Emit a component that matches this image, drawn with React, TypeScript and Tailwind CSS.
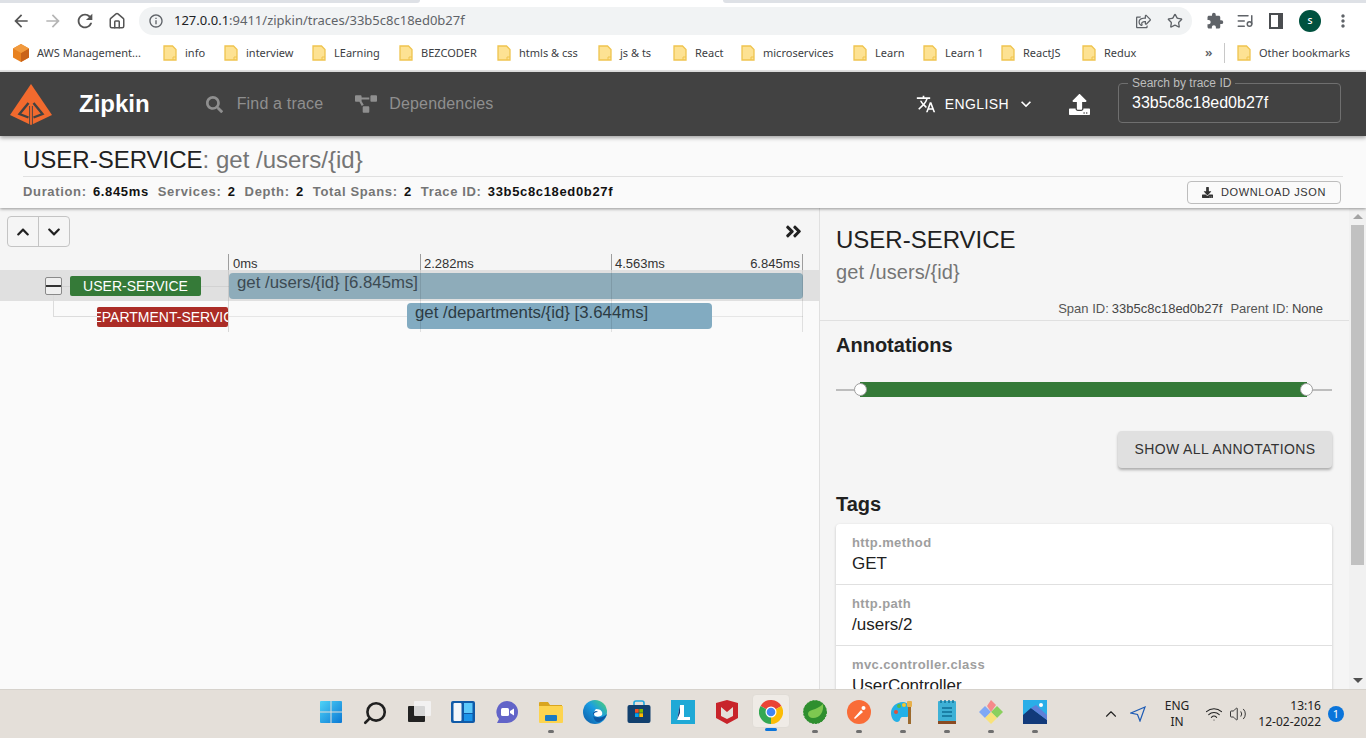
import React from 'react';
import { ChevronUp, Home, ListMusic, Search, Star, Volume2, Wifi } from 'lucide-react';
import {
  FaAngleDoubleRight,
  FaChevronDown,
  FaChevronUp,
  FaDownload,
  FaProjectDiagram,
  FaRegShareSquare,
  FaSearch,
  FaUpload,
} from 'react-icons/fa';
import {
  MdArrowBack,
  MdArrowForward,
  MdExtension,
  MdInfoOutline,
  MdKeyboardArrowDown,
  MdMoreVert,
  MdRefresh,
  MdTranslate,
} from 'react-icons/md';

/* ---------------- Bookmarks ---------------- */
const bookmarks = [
  { label: 'info', width: 'w-[21px]' },
  { label: 'interview', width: 'w-[48px]' },
  { label: 'LEarning', width: 'w-[47px]' },
  { label: 'BEZCODER', width: 'w-[58px]' },
  { label: 'htmls & css', width: 'w-[61px]' },
  { label: 'js & ts', width: 'w-[35px]' },
  { label: 'React', width: 'w-[28px]' },
  { label: 'microservices', width: 'w-[72px]' },
  { label: 'Learn', width: 'w-[30px]' },
  { label: 'Learn 1', width: 'w-[38px]' },
  { label: 'ReactJS', width: 'w-[41px]' },
  { label: 'Redux', width: 'w-[33px]' },
];

const Folder = () => (
  <svg width="14" height="16" viewBox="0 0 14 16" className="shrink-0">
    <path d="M1 1h8.5L13 4.5V15H1z" fill="#fde293" stroke="#efc44f" strokeWidth="1.3" />
    <path d="M10 15v-3h3" fill="none" stroke="#efc44f" strokeWidth="1" />
  </svg>
);

const BrowserChrome = () => (
  <div className="h-[72px] shrink-0 bg-white border-b-2 border-[#e3e3e3] font-['Noto_Sans',sans-serif]">
    <div className="flex h-[3px]">
      <div className="w-[420px] bg-[#dee1e6] rounded-br" />
      <div className="w-[303px]" />
      <div className="flex-1 bg-[#dee1e6] rounded-bl" />
    </div>

    {/* Toolbar */}
    <div className="flex items-center h-[32px] mt-[2px] mb-[1px] pl-[11px] text-[#5f6368]">
      <MdArrowBack size={20} className="text-[#555]" />
      <MdArrowForward size={20} className="ml-[12px] text-[#b5b5b5]" />
      <MdRefresh size={22} className="ml-[11px] text-[#555]" />
      <Home size={18} className="ml-[12px] text-[#555]" />
      <div className="flex items-center ml-[13px] w-[1053px] h-[28px] rounded-full bg-[#f1f3f4] pl-[9px]">
        <MdInfoOutline size={16} />
        <span className="ml-[10px] text-[13px] text-[#202124] whitespace-nowrap">
          127.0.0.1<span className="text-[#5f6368]">:9411/zipkin/traces/33b5c8c18ed0b27f</span>
        </span>
        <div className="ml-auto flex items-center">
          <FaRegShareSquare size={15} />
          <Star size={16} className="ml-[16px] mr-[9px]" />
        </div>
      </div>
      <MdExtension size={18} className="ml-[14px]" />
      <ListMusic size={18} className="ml-[12px]" />
      <svg width="14" height="16" viewBox="0 0 14 16" className="ml-[15px]">
        <rect x="1" y="1" width="12" height="14" fill="none" stroke="#4a4d50" strokeWidth="2" />
        <rect x="9" y="1" width="4" height="14" fill="#4a4d50" />
      </svg>
      <div className="ml-[16px] w-[22px] h-[22px] rounded-full bg-[#00523f] text-white text-[9px] font-semibold flex items-center justify-center">
        S
      </div>
      <MdMoreVert size={20} className="ml-[12px]" />
    </div>

    {/* Bookmarks bar */}
    <div className="flex items-center h-[30px] pl-[13px] text-[11px] text-[#3c4043] whitespace-nowrap">
      <svg width="16" height="18" viewBox="0 0 16 18" className="shrink-0">
        <path d="M8 0l8 4.5v9L8 18l-8-4.5v-9z" fill="#e8811f" />
        <path d="M8 9l8-4.5v9L8 18z" fill="#c9631a" />
        <path d="M8 0l8 4.5L8 9 0 4.5z" fill="#f19a3e" />
      </svg>
      <span className="ml-[8px] w-[108px]">AWS Management...</span>
      {bookmarks.map((b) => (
        <div key={b.label} className="flex items-center gap-[8px] shrink-0 ml-[18px]">
          <Folder />
          <span className={b.width}>{b.label}</span>
        </div>
      ))}
      <span className="ml-[68px] w-[7px] text-[13px] font-semibold text-[#5f6368]">»</span>
      <div className="ml-[12px] w-px h-[20px] bg-[#c8c8c8]" />
      <div className="ml-[12px] flex items-center gap-[8px]">
        <Folder />
        <span>Other bookmarks</span>
      </div>
    </div>
  </div>
);

/* ---------------- Zipkin header ---------------- */
const ZipkinLogo = () => (
  <svg width="42" height="41" viewBox="0 0 42 41" className="shrink-0">
    <path d="M21 0l21 31-21 10L0 31z" fill="#f26a2e" />
    <path d="M18.5 19L9.5 30l9 3.5M23.5 19l9 11-9 3.5" fill="none" stroke="#424242" strokeWidth="2.4" />
    <path d="M19.6 41V22M22.4 41V22" stroke="#424242" strokeWidth="0.9" />
  </svg>
);

const ZipkinHeader = () => (
  <header className="relative z-20 flex items-center h-[64px] shrink-0 bg-[#424242] shadow-[0_2px_4px_rgba(0,0,0,0.35)] pl-[10px] pr-[25px]">
    <ZipkinLogo />
    <span className="ml-[27px] text-[24px] font-bold text-white">Zipkin</span>
    <FaSearch size={17} className="ml-[56px] text-[#8f8f8f]" />
    <span className="ml-[14px] text-[16px] tracking-[0.17px] text-[#8f8f8f]">Find a trace</span>
    <FaProjectDiagram size={22} className="ml-[32px] text-[#8f8f8f]" />
    <span className="ml-[12px] text-[16px] tracking-[0.17px] text-[#8f8f8f]">Dependencies</span>

    <div className="ml-auto flex items-center text-white">
      <MdTranslate size={20} />
      <span className="ml-[9px] text-[14px] font-medium tracking-[0.4px]">ENGLISH</span>
      <MdKeyboardArrowDown size={20} className="ml-[7px]" />
      <FaUpload size={21} className="ml-[33px]" />
      <div className="relative ml-[28px] w-[223px] h-[40px] mb-[3px] border border-[#6f6f6f] rounded flex items-center pl-[13px] text-[16px]">
        <span className="absolute -top-[7px] left-[9px] bg-[#424242] px-[4px] text-[12px] leading-[12px] text-[#bdbdbd]">
          Search by trace ID
        </span>
        33b5c8c18ed0b27f
      </div>
    </div>
  </header>
);

const SubHeader = () => (
  <div className="relative z-10 h-[72px] shrink-0 bg-[#fafafa] shadow-[0_1px_3px_rgba(0,0,0,0.4)] px-[23px] pt-[8px]">
    <div className="h-[32px] text-[24px] leading-[32px] text-[#212121] border-b border-[#e0e0e0] box-content">
      USER-SERVICE<span className="text-[#757575]">: get /users/{'{id}'}</span>
    </div>
    <div className="flex items-center justify-between h-[28px] pr-[2px]">
      <div className="flex gap-[9px] text-[13px] font-bold tracking-[0.65px] text-[#757575] pt-[2px] whitespace-nowrap">
        <span>
          Duration: <span className="ml-[2px] text-[#111]">6.845ms</span>
        </span>
        <span>
          Services: <span className="ml-[2px] text-[#111]">2</span>
        </span>
        <span>
          Depth: <span className="ml-[2px] text-[#111]">2</span>
        </span>
        <span>
          Total Spans: <span className="ml-[2px] text-[#111]">2</span>
        </span>
        <span>
          Trace ID: <span className="ml-[2px] text-[#111]">33b5c8c18ed0b27f</span>
        </span>
      </div>
      <button className="flex items-center justify-center gap-[8px] w-[154px] h-[23px] mt-[2px] border border-[#bdbdbd] rounded text-[11px] tracking-[0.6px] text-[#333]">
        <FaDownload size={11} />
        DOWNLOAD JSON
      </button>
    </div>
  </div>
);

/* ---------------- Timeline (left pane) ---------------- */
const Timeline = () => (
  <div className="w-[820px] shrink-0 border-r border-[#e0e0e0] bg-[#fafafa]">
    <div className="bg-[#f5f5f5] h-[62px]">
      <div className="flex items-start justify-between pl-[7px] pr-[16px] pt-[8px]">
        <div className="flex w-[63px] h-[31px] border border-[#c4c4c4] rounded text-[#212121]">
          <button className="flex-1 border-r border-[#c4c4c4] flex items-center justify-center">
            <FaChevronUp size={14} />
          </button>
          <button className="flex-1 flex items-center justify-center">
            <FaChevronDown size={14} />
          </button>
        </div>
        <FaAngleDoubleRight size={19} className="mt-[6px] text-[#212121]" />
      </div>
      <div className="flex ml-[228px] w-[575px] h-[16px] mt-[7px] border-r border-[#9e9e9e] text-[13px] leading-[20px] text-[#333]">
        <div className="w-[192px] border-l border-[#9e9e9e] pl-[4px]">0ms</div>
        <div className="w-[191px] border-l border-[#9e9e9e] pl-[3px]">2.282ms</div>
        <div className="flex-1 border-l border-[#9e9e9e] pl-[3px] flex justify-between pr-[2px]">
          <span>4.563ms</span>
          <span>6.845ms</span>
        </div>
      </div>
    </div>

    <div className="relative">
      {/* Row 1 */}
      <div className="relative flex h-[31px] bg-[#e0e0e0]">
        <div className="absolute left-[54px] right-[16px] top-[16px] h-px bg-[#d2d2d2]" />
        <div className="relative flex items-center w-[229px] shrink-0 pl-[45px]">
          <div className="flex flex-col justify-center w-[17px] h-[18px] bg-[#efefef] border border-[#8a8a8a] rounded-[2px]">
            <div className="h-[2px] bg-[#333]" />
          </div>
          <div className="ml-[8px] w-[131px] h-[20px] rounded-[2px] bg-[#357a38] text-white text-[14px] leading-[20px] text-center">
            USER-SERVICE
          </div>
        </div>
        <div className="relative w-[574px] h-[26px] mt-[3px] rounded bg-[#8eacba] text-[#3c4a52] text-[16.8px] leading-[20px] pl-[8px]">
          get /users/{'{id}'} [6.845ms]
        </div>
      </div>

      {/* Row 2 */}
      <div className="relative flex h-[31px]">
        <div className="absolute left-[53px] -top-[6px] w-[44px] h-[22px] border-l border-b border-[#dcdcdc]" />
        <div className="absolute left-[228px] right-[16px] top-[15px] h-px bg-[#e6e6e6]" />
        <div className="relative flex items-center w-[228px] shrink-0 pl-[97px]">
          <div className="w-[131px] h-[20px] rounded-[2px] bg-[#ab2c26] text-white text-[14px] leading-[20px] overflow-hidden flex justify-center whitespace-nowrap">
            DEPARTMENT-SERVICE
          </div>
        </div>
        <div className="relative ml-[179px] w-[305px] h-[26px] mt-[2px] rounded bg-[#82abc1] text-[#2c3b44] text-[16.8px] leading-[20px] pl-[8px]">
          get /departments/{'{id}'} [3.644ms]
        </div>
      </div>

      {/* Tick lines over the rows */}
      <div className="absolute left-[228px] top-0 h-[31px] w-px bg-black/10" />
      <div className="absolute left-[228px] top-[31px] h-[31px] w-px bg-[#d8d8d8]" />
      <div className="absolute left-[420px] top-0 h-[62px] w-px bg-black/10" />
      <div className="absolute left-[611px] top-0 h-[62px] w-px bg-black/10" />
      <div className="absolute left-[802px] top-0 h-[62px] w-px bg-black/10" />
    </div>
  </div>
);

/* ---------------- Span details (right pane) ---------------- */
const tags = [
  { key: 'http.method', value: 'GET' },
  { key: 'http.path', value: '/users/2' },
  { key: 'mvc.controller.class', value: 'UserController' },
];

const SpanDetail = () => (
  <div className="w-[529px] shrink-0 bg-[#f5f5f5] overflow-hidden">
    <div className="border-b border-[#e0e0e0] h-[113px] pl-[16px] pt-[16px]">
      <div className="text-[24px] leading-[32px] text-[#212121]">USER-SERVICE</div>
      <div className="mt-[2px] text-[20px] tracking-[0.1px] leading-[28px] text-[#757575]">get /users/{'{id}'}</div>
      <div className="mt-[15px] pr-[26px] flex justify-end gap-[8px] text-[13px] leading-[16px] text-[#555] whitespace-nowrap">
        <span className="flex gap-[3px]">
          Span ID:<span className="text-[#444]">33b5c8c18ed0b27f</span>
        </span>
        <span className="flex gap-[3px]">
          Parent ID:<span className="text-[#444]">None</span>
        </span>
      </div>
    </div>

    <div className="pl-[16px] pr-[17px]">
      <div className="mt-[10px] text-[20px] leading-[28px] font-bold text-[#212121]">Annotations</div>

      <div className="relative mt-[23px] h-[15px] flex items-center">
        <div className="w-full h-[2px] bg-[#bdbdbd]" />
        <div className="absolute left-[24px] right-[25px] top-0 h-[15px] bg-[#357a38]" />
        <div className="absolute left-[18px] top-[1px] w-[13px] h-[13px] rounded-full bg-white border border-[#9e9e9e]" />
        <div className="absolute right-[19px] top-[1px] w-[13px] h-[13px] rounded-full bg-white border border-[#9e9e9e]" />
      </div>

      <div className="mt-[34px] flex justify-end">
        <button className="w-[214px] h-[37px] rounded bg-[#e0e0e0] text-[14px] tracking-[0.4px] text-[#333] shadow-[0_2px_3px_rgba(0,0,0,0.3)]">
          SHOW ALL ANNOTATIONS
        </button>
      </div>

      <div className="mt-[22px] text-[20px] leading-[28px] font-bold text-[#212121]">Tags</div>

      <div className="mt-[6px] rounded bg-white shadow-[0_1px_3px_rgba(0,0,0,0.2)]">
        {tags.map((tag) => (
          <div key={tag.key} className="h-[61px] border-b border-[#e0e0e0] pl-[16px] pt-[10px]">
            <div className="text-[13px] leading-[18px] font-bold text-[#9e9e9e] tracking-[0.4px]">{tag.key}</div>
            <div className="text-[17px] leading-[24px] text-[#212121]">{tag.value}</div>
          </div>
        ))}
      </div>
    </div>
  </div>
);

const ScrollBar = () => (
  <div className="flex-1 flex flex-col items-center bg-[#f1f1f1]">
    <div className="mt-[6px] w-0 h-0 border-x-[5px] border-x-transparent border-b-[5px] border-b-[#a3a3a3]" />
    <div className="mt-[6px] w-[13px] h-[340px] bg-[#c1c1c1]" />
    <div className="mt-auto mb-[6px] w-0 h-0 border-x-[5px] border-x-transparent border-t-[5px] border-t-[#505050]" />
  </div>
);

/* ---------------- Windows taskbar ---------------- */
const Dot = () => <div className="w-[6px] h-[3px] rounded-full bg-[#6f6f6f]" />;

const taskIcons: { id: string; dot?: boolean; active?: boolean; icon: React.ReactNode }[] = [
  {
    id: 'start',
    icon: (
      <svg width="24" height="24" viewBox="0 0 24 24">
        <defs>
          <linearGradient id="win" x1="0" y1="0" x2="1" y2="1">
            <stop offset="0" stopColor="#4fd3f7" />
            <stop offset="1" stopColor="#0a78d4" />
          </linearGradient>
        </defs>
        <path d="M1 2a1 1 0 011-1h9.5v10.5H1zM12.5 1H22a1 1 0 011 1v9.5H12.5zM1 12.5h10.5V23H2a1 1 0 01-1-1zM12.5 12.5H23V22a1 1 0 01-1 1h-9.5z" fill="url(#win)" />
      </svg>
    ),
  },
  {
    id: 'search',
    icon: <Search size={26} strokeWidth={2.4} className="-scale-x-100 text-[#202020]" />,
  },
  {
    id: 'taskview',
    icon: (
      <svg width="24" height="24" viewBox="0 0 24 24">
        <rect x="1" y="6" width="17" height="16" rx="1" fill="#222" />
        <rect x="7" y="1" width="17" height="15" rx="1" fill="#f4f4f4" fillOpacity="0.85" />
      </svg>
    ),
  },
  {
    id: 'widgets',
    icon: (
      <svg width="24" height="24" viewBox="0 0 24 24">
        <rect x="0" y="1" width="24" height="22" rx="2" fill="#0f5aa8" />
        <rect x="2.5" y="3" width="8" height="18" rx="1" fill="#f2f6fa" />
        <rect x="13" y="3" width="8.5" height="10" fill="#5cc8fa" />
        <rect x="13" y="14" width="8.5" height="7" fill="#1a94ea" />
      </svg>
    ),
  },
  {
    id: 'chat',
    icon: (
      <svg width="24" height="24" viewBox="0 0 24 24">
        <path d="M12 1a11 11 0 110 22H2l2-4A11 11 0 0112 1z" fill="#6264c8" />
        <rect x="6" y="8" width="8" height="8" rx="1.5" fill="#fff" />
        <path d="M15 11l4-2.5v7L15 13z" fill="#fff" />
      </svg>
    ),
  },
  {
    id: 'explorer',
    dot: true,
    icon: (
      <svg width="24" height="24" viewBox="0 0 24 24">
        <path d="M0 3a1 1 0 011-1h8l2 3h12v4H0z" fill="#d9a520" />
        <path d="M0 6h24v16a1 1 0 01-1 1H1a1 1 0 01-1-1z" fill="#fdd44f" />
        <rect x="6" y="15" width="12" height="6" rx="1" fill="#1b7ac4" />
      </svg>
    ),
  },
  {
    id: 'edge',
    icon: (
      <svg width="24" height="24" viewBox="0 0 24 24">
        <defs>
          <linearGradient id="edge" x1="0" y1="1" x2="1" y2="0">
            <stop offset="0" stopColor="#0c59a4" />
            <stop offset="0.55" stopColor="#1b9de2" />
            <stop offset="1" stopColor="#53d66b" />
          </linearGradient>
        </defs>
        <circle cx="12" cy="12" r="12" fill="url(#edge)" />
        <path d="M13 9c5 0 7 3 6 6-2 2-5 2-7 1-2-2-1-5 1-7z" fill="#fff" />
        <path d="M15 12a3 3 0 10-1 5c3 1 7 0 10-3-1 4-6 9-10 8-4-2-6-10 1-10z" fill="#0c59a4" />
      </svg>
    ),
  },
  {
    id: 'store',
    icon: (
      <svg width="24" height="24" viewBox="0 0 24 24">
        <path d="M7 5V3a2 2 0 012-2h6a2 2 0 012 2v2" fill="none" stroke="#1fa8e0" strokeWidth="1.6" />
        <rect x="0.5" y="5" width="23" height="18" rx="2" fill="#12406e" />
        <rect x="8" y="9" width="3.7" height="3.7" fill="#f25022" />
        <rect x="12.3" y="9" width="3.7" height="3.7" fill="#7fba00" />
        <rect x="8" y="13.3" width="3.7" height="3.7" fill="#00a4ef" />
        <rect x="12.3" y="13.3" width="3.7" height="3.7" fill="#ffb900" />
      </svg>
    ),
  },
  {
    id: 'lens',
    icon: (
      <svg width="24" height="24" viewBox="0 0 24 24">
        <rect width="24" height="24" fill="#1fa9d6" />
        <path d="M9 5h4v12h6v3H6z" fill="#fff" />
        <path d="M9 5v8l-3 7z" fill="#123a7a" />
      </svg>
    ),
  },
  {
    id: 'mcafee',
    icon: (
      <svg width="24" height="24" viewBox="0 0 24 24">
        <path d="M1 3l11-3 11 3v15l-11 6-11-6zM6 7v9l6 3 6-3V7l-6 5z" fill="#c8242b" fillRule="evenodd" />
      </svg>
    ),
  },
  {
    id: 'chrome',
    active: true,
    icon: (
      <svg width="24" height="24" viewBox="0 0 24 24">
        <path d="M12 12L1.6 6A12 12 0 0122.4 6z" fill="#ea4335" />
        <path d="M12 12l10.4-6A12 12 0 0112 24z" fill="#fbbc05" />
        <path d="M12 12v12A12 12 0 011.6 6z" fill="#34a853" />
        <circle cx="12" cy="12" r="5.5" fill="#fff" />
        <circle cx="12" cy="12" r="4.3" fill="#4285f4" />
      </svg>
    ),
  },
  {
    id: 'spring',
    dot: true,
    icon: (
      <svg width="24" height="24" viewBox="0 0 24 24">
        <circle cx="12" cy="12" r="11.5" fill="#2f8f2f" stroke="#2f8f2f" strokeDasharray="2 1.2" strokeWidth="1" />
        <path d="M20 4c1 8-3 14-10 14-3 0-5-2-5-4 0-5 8-3 15-10z" fill="#7ec850" />
      </svg>
    ),
  },
  {
    id: 'postman',
    dot: true,
    icon: (
      <svg width="24" height="24" viewBox="0 0 24 24">
        <circle cx="12" cy="12" r="12" fill="#f96c37" />
        <path d="M7 18l7-8 2 2-8 7z" fill="#fff" />
        <circle cx="16.5" cy="8" r="2" fill="#fff" />
      </svg>
    ),
  },
  {
    id: 'paint',
    dot: true,
    icon: (
      <svg width="24" height="24" viewBox="0 0 24 24">
        <path d="M12 2C5 2 0 7 0 13c0 5 3 9 6 9 4 0 2-4 5-5 3 0 8 1 9-4 1-6-3-11-8-11z" fill="#23b0e6" />
        <circle cx="5" cy="12" r="2" fill="#e0503a" />
        <circle cx="8" cy="6" r="2" fill="#57b947" />
        <circle cx="13" cy="5" r="2" fill="#f6c52e" />
        <rect x="17" y="6" width="3" height="18" fill="#9c6a2e" />
        <rect x="16" y="1" width="5" height="6" rx="1" fill="#e8b04a" />
      </svg>
    ),
  },
  {
    id: 'notepad',
    dot: true,
    icon: (
      <svg width="24" height="24" viewBox="0 0 24 24">
        <rect x="3" y="1" width="18" height="22" rx="1" fill="#3eb1d6" />
        <rect x="3" y="21" width="18" height="3" fill="#8a4b22" />
        <path d="M7 8h10M7 12h10M7 16h10" stroke="#0f6f96" strokeWidth="1.6" />
        <path d="M6 0v3M10 0v3M14 0v3M18 0v3" stroke="#0f6f96" strokeWidth="1.4" />
      </svg>
    ),
  },
  {
    id: 'app',
    dot: true,
    icon: (
      <svg width="24" height="24" viewBox="0 0 24 24">
        <path d="M6 6l6 6-6 6-6-6z" fill="#7fa8f5" />
        <path d="M12 0l5 5-5 7-4-6z" fill="#f58a8a" />
        <path d="M18 6l6 6-6 6-6-6z" fill="#8ad05e" />
        <path d="M12 12l6 6-6 6-6-6z" fill="#f8e27a" />
      </svg>
    ),
  },
  {
    id: 'photos',
    dot: true,
    icon: (
      <svg width="24" height="24" viewBox="0 0 24 24">
        <rect width="24" height="24" fill="#2aaee8" />
        <path d="M0 24V15l8-7 16 12v4z" fill="#123a7a" />
        <path d="M8 8l5-3 11 10v5z" fill="#5f7fd8" />
        <circle cx="18" cy="5" r="2" fill="#fff" />
      </svg>
    ),
  },
];

const Taskbar = () => (
  <footer className="relative z-10 flex h-[49px] shrink-0 bg-[#e4dfd9] border-t border-[#d6d2cc] pl-[319px] font-['Noto_Sans',sans-serif]">
    <div className="flex gap-[20px]">
      {taskIcons.map((t) => (
        <div key={t.id} className="relative w-[24px] h-full flex justify-center pt-[10px]">
          {t.active && (
            <div className="absolute -left-[7px] top-[4px] w-[38px] h-[34px] rounded bg-[#efebe6] border border-[#e0dcd6]" />
          )}
          <div className="relative">{t.icon}</div>
          {t.dot && (
            <div className="absolute bottom-[5px] left-[9px]">
              <Dot />
            </div>
          )}
          {t.active && (
            <div className="absolute bottom-[7px] left-[6px] w-[12px] h-[3px] rounded-full bg-[#0a74da]" />
          )}
        </div>
      ))}
    </div>

    <div className="ml-auto flex items-center pr-[22px] text-[12px] leading-[16px] text-[#222]">
      <ChevronUp size={18} strokeWidth={1.5} className="text-[#222]" />
      <svg width="16" height="16" viewBox="0 0 16 16" className="ml-[10px]">
        <path d="M15 1L1 7l6.5 1.5L10 15z" fill="none" stroke="#1d5bb5" strokeWidth="1.2" />
      </svg>
      <div className="ml-[9px] w-[44px] text-center">
        <div>ENG</div>
        <div>IN</div>
      </div>
      <Wifi size={18} strokeWidth={1.4} className="ml-[6px] text-[#222]" />
      <Volume2 size={18} strokeWidth={1.3} className="ml-[6px] text-[#333]" />
      <div className="ml-[10px] w-[64px] text-right">
        <div>13:16</div>
        <div>12-02-2022</div>
      </div>
      <div className="ml-[7px] w-[16px] h-[16px] rounded-full bg-[#0a74da] text-white text-[11px] flex items-center justify-center">
        1
      </div>
    </div>
  </footer>
);

const App: React.FC = () => {
  return (
    <div className="flex flex-col h-screen w-full overflow-hidden bg-[#fafafa] font-['Liberation_Sans',Arial,sans-serif]">
      <BrowserChrome />
      <ZipkinHeader />
      <SubHeader />
      <main className="flex flex-1 min-h-0">
        <Timeline />
        <SpanDetail />
        <ScrollBar />
      </main>
      <Taskbar />
    </div>
  );
};

export default App;
